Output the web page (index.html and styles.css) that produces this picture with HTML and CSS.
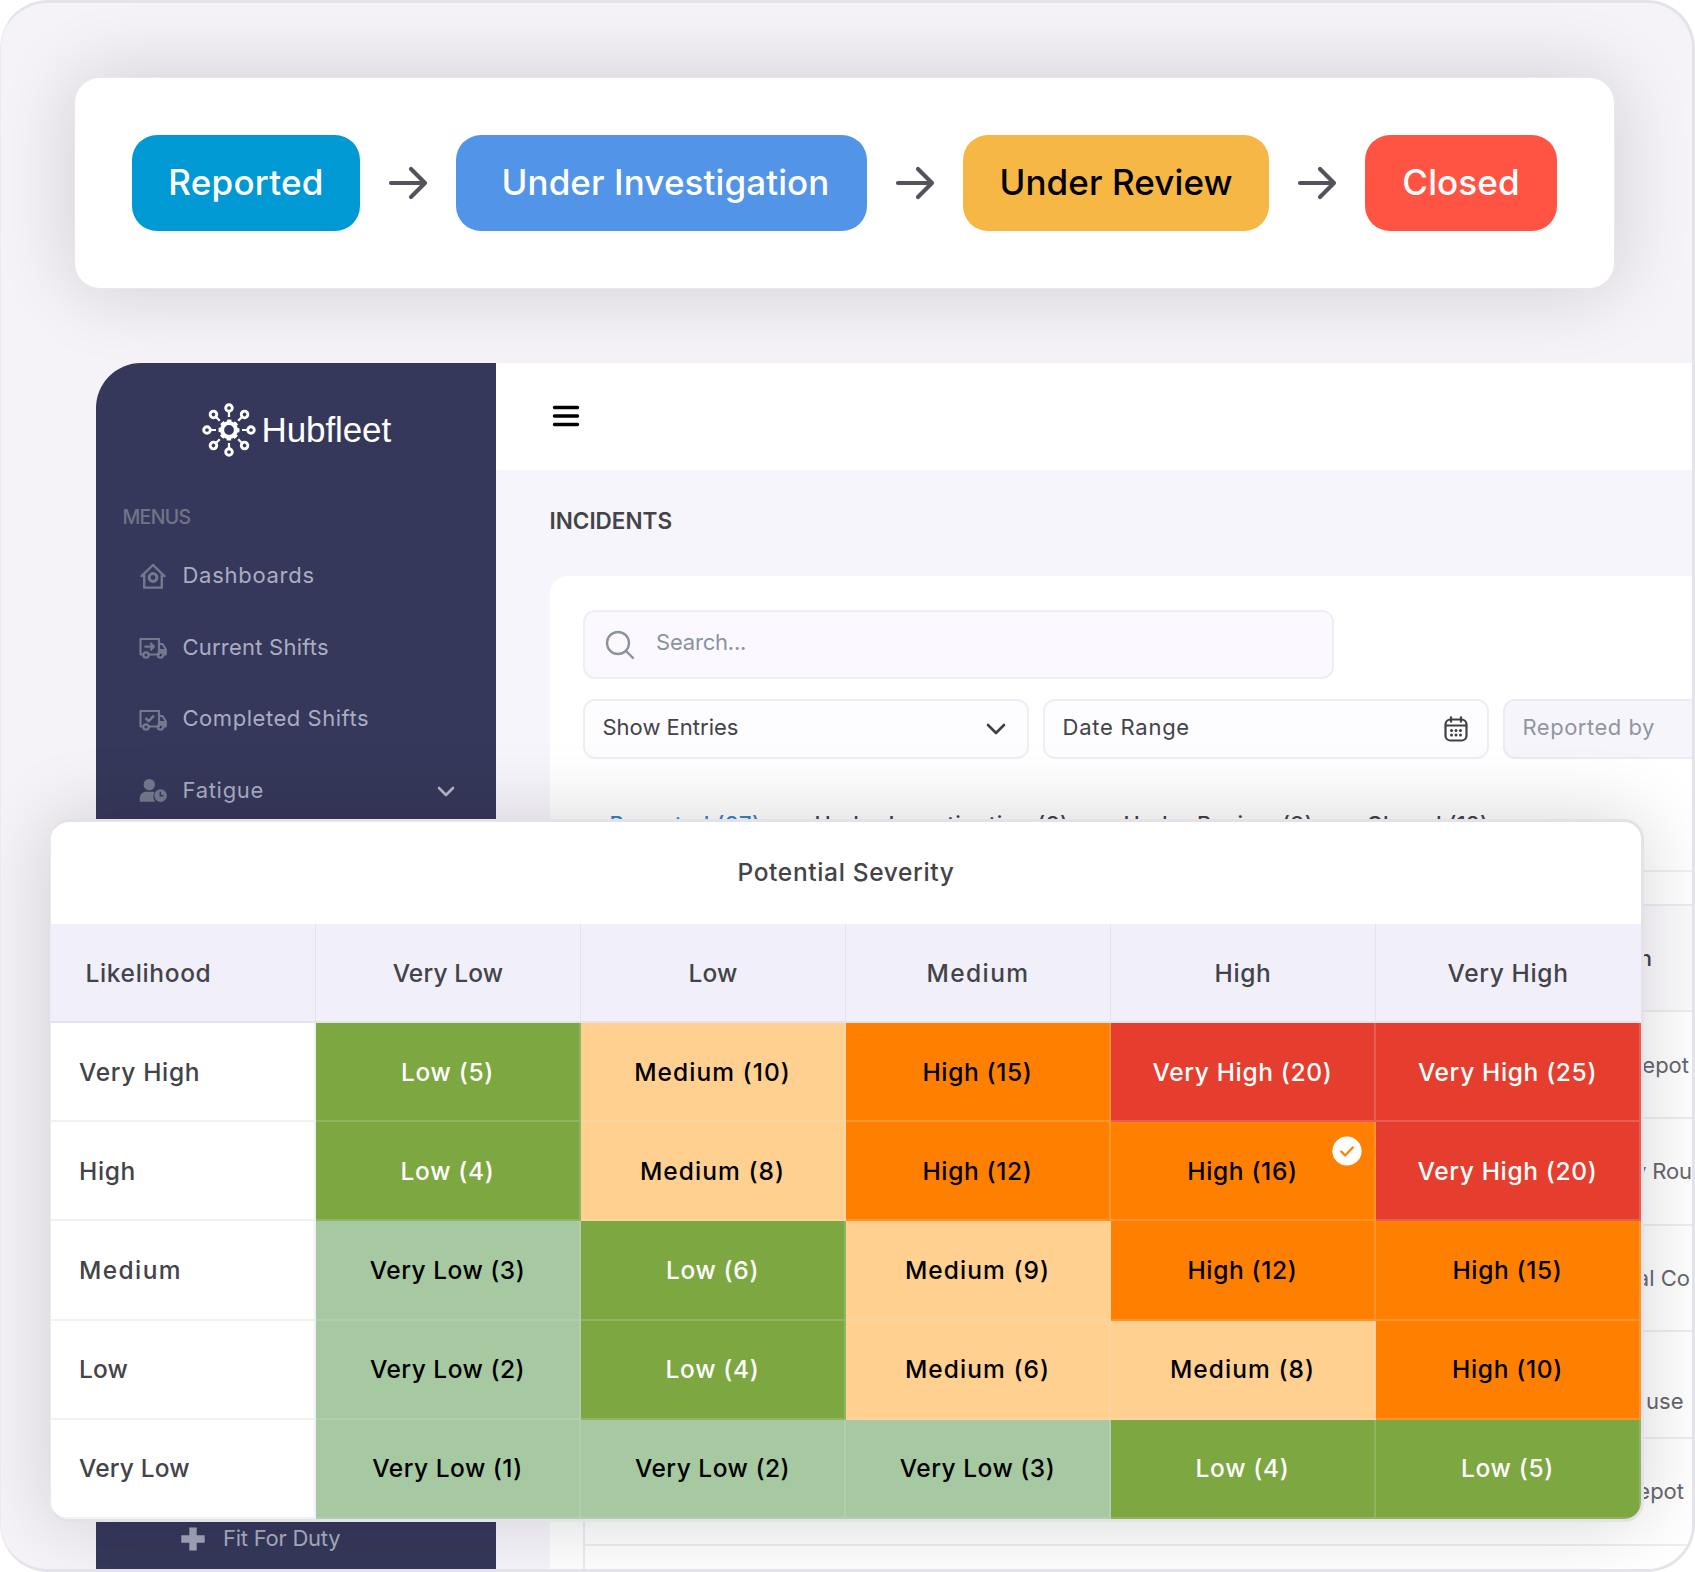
FILE: index.html
```html
<!DOCTYPE html>
<html lang="en">
<head>
<meta charset="utf-8">
<title>Hubfleet – Incidents</title>
<link rel="stylesheet" href="styles.css">
</head>
<body>
<div class="frame">
  <section class="flow">
    <span class="step step-reported">Reported</span>
    <svg class="arrow" viewBox="0 0 40 36"><path d="M3 18H36M23 4l14 14-14 14"/></svg>
    <span class="step step-investigation">Under Investigation</span>
    <svg class="arrow" viewBox="0 0 40 36"><path d="M3 18H36M23 4l14 14-14 14"/></svg>
    <span class="step step-review">Under Review</span>
    <svg class="arrow" viewBox="0 0 40 36"><path d="M3 18H36M23 4l14 14-14 14"/></svg>
    <span class="step step-closed">Closed</span>
  </section>

  <div class="app">
    <aside class="sidebar">
      <div class="logo">
        <svg class="logo-mark" viewBox="-27 -27 54 54">
          <circle r="7" fill="none" stroke="#fff" stroke-width="4.200"/>
          <circle r="9" fill="none" stroke="#fff" stroke-width="3" stroke-dasharray="4.200 2.870" stroke-dashoffset="2.100"/>
          <g fill="none" stroke="#fff" stroke-width="2.900">
            <g><circle cy="-22" r="3.300"/><path d="M0-18v5" stroke-width="2.200"/></g>
            <g transform="rotate(45)"><circle cy="-22" r="3.300"/><path d="M0-18v5" stroke-width="2.200"/></g>
            <g transform="rotate(90)"><circle cy="-22" r="3.300"/><path d="M0-18v5" stroke-width="2.200"/></g>
            <g transform="rotate(135)"><circle cy="-22" r="3.300"/><path d="M0-18v5" stroke-width="2.200"/></g>
            <g transform="rotate(180)"><circle cy="-22" r="3.300"/><path d="M0-18v5" stroke-width="2.200"/></g>
            <g transform="rotate(225)"><circle cy="-22" r="3.300"/><path d="M0-18v5" stroke-width="2.200"/></g>
            <g transform="rotate(270)"><circle cy="-22" r="3.300"/><path d="M0-18v5" stroke-width="2.200"/></g>
            <g transform="rotate(315)"><circle cy="-22" r="3.300"/><path d="M0-18v5" stroke-width="2.200"/></g>
          </g>
        </svg>
        <span class="logo-text">Hubfleet</span>
      </div>
      <div class="menu-label">MENUS</div>
      <nav class="menu">
        <a class="item">
          <svg class="icon" viewBox="0 0 28 28"><g fill="none" stroke="#747a8e" stroke-width="2.400" stroke-linejoin="round" stroke-linecap="round"><path d="M2.500 14.200 14 3l11.500 11.200M5.200 12v13.600h17.600V12"/><circle cx="14" cy="15.500" r="3.900" stroke-width="3"/></g></svg>
          <span class="t-dashboards">Dashboards</span>
        </a>
        <a class="item">
          <svg class="icon icon-high" viewBox="0 0 28 28"><g fill="none" stroke="#747a8e" stroke-width="2.200" stroke-linejoin="round"><path d="M4 21.500H1.500V6H20v15.500H10M20 11h3.500l3.200 5v5.500H25"/><circle cx="7" cy="22" r="2.700"/><circle cx="21.500" cy="22" r="2.700"/><path d="M5.500 13.600h9M11.300 10l3.600 3.600-3.600 3.600"/></g><path d="M20 16h6.700v5h-2l-3-2.500H20z" fill="#747a8e"/></svg>
          <span class="t-current">Current Shifts</span>
        </a>
        <a class="item">
          <svg class="icon" viewBox="0 0 28 28"><g fill="none" stroke="#747a8e" stroke-width="2.200" stroke-linejoin="round"><path d="M4 21.500H1.500V6H20v15.500H10M20 11h3.500l3.200 5v5.500H25"/><circle cx="7" cy="22" r="2.700"/><circle cx="21.500" cy="22" r="2.700"/><path d="M6.500 13l3.200 3.200 5.200-5.600" stroke-width="2.500"/></g><path d="M20 16h6.700v5h-2l-3-2.500H20z" fill="#747a8e"/></svg>
          <span class="t-completed">Completed Shifts</span>
        </a>
        <a class="item">
          <svg class="icon" viewBox="0 0 28 28"><g fill="#747a8e"><circle cx="10.300" cy="7.600" r="5.700"/><path d="M.8 24.800v-3.300c0-4 2.800-6.700 6.400-6.700h6c1.200 0 1.900.3 2.400.8-1.900 3.200-1.700 6.700.8 9.200z"/><circle cx="21.600" cy="18.600" r="6.300"/></g><path d="M21.300 14.800v4h3" fill="none" stroke="#36385b" stroke-width="1.500"/></svg>
          <span class="t-fatigue">Fatigue</span>
          <svg class="caret" viewBox="0 0 18 12"><path d="M2 2l7 7 7-7"/></svg>
        </a>
      </nav>
      <a class="subitem">
        <svg class="plus" viewBox="0 0 24 24"><path d="M8.300.5h7.400v7.800h8v7.400h-8v7.800H8.300v-7.800h-8V8.300h8z" fill="#a0a5b8"/></svg>
        <span>Fit For Duty</span>
      </a>
    </aside>

    <main class="main">
      <header class="topbar">
        <svg class="burger" viewBox="0 0 28 22"><path d="M2.500 2.500h23M2.500 11h23M2.500 19.500h23"/></svg>
      </header>
      <h1 class="title">INCIDENTS</h1>
      <section class="panel">
        <div class="search">
          <svg class="search-icon" viewBox="0 0 30 30"><circle cx="13" cy="13" r="11"/><path d="M21 21l7 7"/></svg>
          <span>Search...</span>
        </div>
        <div class="filters">
          <div class="field"><span>Show Entries</span><svg class="chev" viewBox="0 0 20 14"><path d="M2 3l8 8 8-8"/></svg></div>
          <div class="field"><span class="t-date">Date Range</span>
            <svg class="calendar" viewBox="0 0 24 26"><g fill="none" stroke="#3f3f46" stroke-width="2.200" stroke-linecap="round"><rect x="1.500" y="3.500" width="21" height="21" rx="5"/><path d="M2 9.500h20M7 1.300v4.400M17 1.300v4.400"/></g><g fill="#3f3f46"><circle cx="7.500" cy="14.500" r="1.500"/><circle cx="12" cy="14.500" r="1.500"/><circle cx="16.500" cy="14.500" r="1.500"/><circle cx="7.500" cy="19" r="1.500"/><circle cx="12" cy="19" r="1.500"/><circle cx="16.500" cy="19" r="1.500"/></g></svg>
          </div>
          <div class="field field-muted"><span class="t-by">Reported by</span></div>
        </div>
        <div class="tabs">
          <span class="tab tab-active">Reported (27)</span>
          <span class="tab tab-inv">Under Investigation (8)</span>
          <span class="tab tab-rev">Under Review (9)</span>
          <span class="tab tab-closed">Closed (12)</span>
        </div>
        <div class="table">
          <div class="row row-head"><span class="cell-head">Location</span></div>
          <div class="row"><span class="cell-a">Depot</span></div>
          <div class="row"><span class="cell-b">City Rou</span></div>
          <div class="row"><span class="cell-c">Coastal Co</span></div>
          <div class="row"><span class="cell-d">use</span></div>
          <div class="row"><span class="cell-e">Depot</span></div>
          <div class="row"></div>
        </div>
      </section>
    </main>
  </div>

  <section class="matrix">
    <h2 class="matrix-title">Potential Severity</h2>
    <div class="grid grid-head">
      <span class="likelihood">Likelihood</span><span class="tight">Very Low</span><span class="tight">Low</span><span class="wide">Medium</span><span>High</span><span>Very High</span>
    </div>
    <div class="grid grid-body">
      <span class="label">Very High</span><span class="low">Low (5)</span><span class="medium">Medium (10)</span><span class="high">High (15)</span><span class="very-high">Very High (20)</span><span class="very-high">Very High (25)</span>
      <span class="label">High</span><span class="low">Low (4)</span><span class="medium">Medium (8)</span><span class="high">High (12)</span><span class="high selected">High (16)<svg class="check" viewBox="0 0 30 30"><circle cx="15" cy="15" r="14.600" fill="#fff"/><path d="M9.200 15.500l3.900 3.900 7.700-8" fill="none" stroke="#ff8000" stroke-width="2.200" stroke-linecap="round" stroke-linejoin="round"/></svg></span><span class="very-high">Very High (20)</span>
      <span class="label wide">Medium</span><span class="very-low">Very Low (3)</span><span class="low">Low (6)</span><span class="medium">Medium (9)</span><span class="high">High (12)</span><span class="high">High (15)</span>
      <span class="label tight">Low</span><span class="very-low">Very Low (2)</span><span class="low">Low (4)</span><span class="medium">Medium (6)</span><span class="medium">Medium (8)</span><span class="high">High (10)</span>
      <span class="label tight">Very Low</span><span class="very-low">Very Low (1)</span><span class="very-low">Very Low (2)</span><span class="very-low">Very Low (3)</span><span class="low">Low (4)</span><span class="low">Low (5)</span>
    </div>
  </section>
</div>
</body>
</html>
```
FILE: styles.css
```css
* { box-sizing: border-box; }

body {
  margin: 0;
  background: #fff;
  font-family: Inter, "Liberation Sans", sans-serif;
  color: #434349;
}

.frame {
  position: relative;
  display: flex;
  flex-direction: column;
  width: 1695px;
  height: 1572px;
  overflow: hidden;
  border: 3px solid #e4e3e9;
  border-left: 1px solid #eceaf0;
  border-radius: 48px;
  background: #f5f3f8;
}

/* Status flow card */
.flow {
  display: flex;
  align-items: center;
  justify-content: space-between;
  flex: none;
  width: 1541px;
  height: 212px;
  margin: 74px 0 0 73px;
  padding: 0 57px;
  border: 1px solid #e9e7ed;
  border-radius: 26px;
  background: #fff;
  box-shadow: 0 0 78px rgba(20, 10, 18, .165);
}

.step {
  height: 96px;
  border-radius: 25px;
  color: #fff;
  font-size: 35px;
  font-weight: 500;
  letter-spacing: .1px;
  line-height: 95px;
  text-align: center;
  white-space: nowrap;
}
.step-reported { width: 228px; background: #0099d4; letter-spacing: .25px; }
.step-investigation { width: 411px; padding-left: 8px; background: #5294e8; }
.step-review { width: 306px; background: #f6b744; color: #000; }
.step-closed { width: 192px; background: #ff5443; }

.arrow {
  width: 40px;
  height: 36px;
  fill: none;
  stroke: #55525d;
  stroke-width: 4.2;
  stroke-linecap: round;
  stroke-linejoin: round;
}

/* Application window */
.app {
  display: flex;
  flex: 1;
  min-height: 0;
  margin: 74px 0 0 95px;
  overflow: hidden;
  border-top-left-radius: 45px;
}

.sidebar {
  display: flex;
  flex-direction: column;
  flex: none;
  width: 400px;
  padding-top: 39px;
  background: #36385b;
  color: #a9adc1;
  font-size: 22px;
}
.logo { display: flex; align-items: center; height: 56px; padding-left: 105.5px; }
.logo-mark { width: 54px; height: 54px; }
.logo-text {
  margin-left: 6px;
  color: #fff;
  font-family: "Liberation Sans", sans-serif;
  font-size: 35px;
  letter-spacing: -.1px;
  line-height: 54px;
}
.menu-label {
  margin-top: 47px;
  padding-left: 26.5px;
  color: #6f7588;
  font-size: 19.5px;
  font-weight: 500;
  letter-spacing: -.7px;
  line-height: 24px;
}
.menu { margin-top: 10px; }
.item {
  display: flex;
  align-items: center;
  height: 71.7px;
  padding: 0 41px 0 42.5px;
}
.item span { margin-left: 16px; }
.t-dashboards { letter-spacing: .72px; }
.t-current { letter-spacing: .22px; }
.t-completed { letter-spacing: .54px; }
.t-fatigue { letter-spacing: .7px; }
.icon { width: 28px; height: 28px; position: relative; top: 1px; }
.icon-high { top: 0; }
.caret { width: 18px; height: 12px; margin: 4px 0 0 auto; fill: none; stroke: #b4b8c8; stroke-width: 2.6; stroke-linecap: round; stroke-linejoin: round; }
.subitem { display: flex; align-items: center; height: 61px; margin-top: auto; padding: 0 0 1px 85px; }
.subitem span { margin-left: 18px; letter-spacing: -.25px; }
.plus { width: 24px; height: 24px; margin-top: 2px; }

.main { display: flex; flex-direction: column; flex: 1; min-width: 0; background: #f7f5fc; }
.topbar { display: flex; align-items: center; flex: none; height: 107px; padding: 0 0 1px 56px; background: #fff; }
.burger { width: 28px; height: 22px; fill: none; stroke: #000; stroke-width: 3.4; stroke-linecap: round; }
.title {
  margin: 38px 0 0 53.5px;
  font-size: 22.5px;
  font-weight: 600;
  line-height: 26px;
}

.panel {
  display: flex;
  flex-direction: column;
  flex: 1;
  margin: 42px 0 0 53.5px;
  padding: 34px 0 0 33px;
  overflow: hidden;
  border-top-left-radius: 18px;
  background: #fff;
  font-size: 22px;
}
.search {
  display: flex;
  align-items: center;
  flex: none;
  width: 751px;
  height: 69px;
  padding-left: 20px;
  border: 2px solid #efedf5;
  border-radius: 12px;
  background: #fbf9ff;
  color: #8b929e;
}
.search span { margin: -5px 0 0 21.5px; letter-spacing: -.2px; }
.search-icon { width: 30px; height: 30px; fill: none; stroke: #8b929e; stroke-width: 2.4; stroke-linecap: round; }
.filters { display: flex; gap: 14px; flex: none; margin-top: 20px; }
.field {
  display: flex;
  align-items: center;
  justify-content: space-between;
  flex: none;
  width: 446px;
  height: 60px;
  padding: 0 20.5px 5px 18px;
  border: 2px solid #f0eef4;
  border-radius: 12px;
  background: #fdfcff;
}
.t-date { letter-spacing: .75px; }
.t-by { letter-spacing: .5px; }
.field-muted { background: #f7f5fc; border-color: #eceaf2; color: #9096a2; }
.chev { width: 20px; height: 14px; position: relative; top: 2px; fill: none; stroke: #3f3f46; stroke-width: 2.6; stroke-linecap: round; stroke-linejoin: round; }
.calendar { width: 24px; height: 26px; margin-right: -2px; position: relative; top: 2px; }

.tabs { display: flex; flex: none; height: 113px; padding: 52px 0 0 27px; border-bottom: 2px solid #f0eff3; font-weight: 500; line-height: 26px; white-space: nowrap; }
.tab { flex: none; letter-spacing: .5px; }
.tab-active { width: 205px; color: #2f86d1; }
.tab-inv { width: 309px; letter-spacing: .58px; }
.tab-rev { width: 243px; }
.tab-closed { letter-spacing: .35px; }

.table { flex: none; margin-top: 31.5px; border-top: 2px solid #eeecf2; border-left: 2px solid #eeecf2; color: #66666f; }
.row { display: flex; align-items: center; justify-content: flex-end; height: 106.7px; border-bottom: 2px solid #efedf2; white-space: nowrap; }
.row-head { background: #fbfafd; color: #434349; font-weight: 500; }
.cell-head { margin-right: 40px; }
.cell-a { margin-right: 3px; }
.cell-b { margin-right: 0; letter-spacing: -.1px; }
.cell-c { margin-right: 2px; }
.cell-d { margin: 32px 8.5px 0 0; }
.cell-e { margin-right: 8px; }

/* Risk matrix, floating above the application */
.matrix {
  position: absolute;
  left: 49px;
  top: 816px;
  width: 1594px;
  height: 703px;
  overflow: hidden;
  border: 3px solid #e4e2e8;
  border-left: 1px solid #eceaf0;
  border-radius: 20px;
  background: #fff;
  box-shadow: 0 0 78px rgba(20, 10, 18, .165);
  font-size: 24.5px;
  font-weight: 500;
  letter-spacing: .65px;
}
.matrix-title {
  height: 102px;
  margin: 0;
  font-size: 24.5px;
  font-weight: 500;
  line-height: 100px;
  text-align: center;
}
.grid { display: grid; grid-template-columns: repeat(6, 265px); }
.grid span {
  display: flex;
  align-items: center;
  justify-content: center;
  border-right: 2px solid rgba(230, 228, 236, .2);
  border-bottom: 2px solid rgba(230, 228, 236, .2);
}
.grid-head { grid-auto-rows: 99px; background: #f0effa; }
.grid-head span { border-color: #e4e3eb; border-right-width: 1px; }
.grid-head .likelihood { justify-content: flex-start; padding-left: 34.5px; }
.grid-head span:last-child { border-right-color: transparent; }
.grid-body { grid-auto-rows: 99.2px; }
.grid .label { justify-content: flex-start; padding-left: 28px; border-color: #f1f0f5; }
.grid .very-low { background-color: #a6c9a1; color: #000; letter-spacing: .5px; }
.grid .low { background-color: #7da740; color: #fff; }
.grid .medium { background-color: #ffd090; color: #000; letter-spacing: 1.05px; }
.grid .high { background-color: #ff8000; color: #000; }
.grid .very-high { background-color: #e53e2f; color: #fff; }
.grid .wide { letter-spacing: 1.4px; }
.grid .tight { letter-spacing: .15px; }
.selected { position: relative; }
.check { position: absolute; top: 14px; right: 12.5px; width: 30px; height: 30px; }
```
